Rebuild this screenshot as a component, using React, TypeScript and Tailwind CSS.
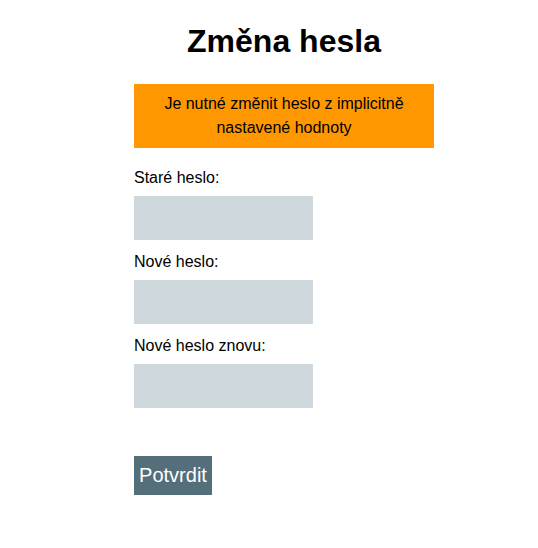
export default function App() {
  return (
    <div className="min-h-[548px] w-full bg-white font-['Liberation_Sans',Arial,sans-serif] text-black">
      <div className="ml-[134px] w-[300px] pt-[23px] flex flex-col">
        <h1 className="text-center text-[32px] leading-[37px] font-bold">Změna hesla</h1>

        <div className="mt-[24px] bg-[#ff9800] py-[8px] px-4 text-center text-[16px] leading-[24px]">
          Je nutné změnit heslo z implicitně nastavené hodnoty
        </div>

        <label className="mt-[18px] text-[16px] leading-[24px]">Staré heslo:</label>
        <input type="password" className="mt-[6px] w-[179px] h-[44px] bg-[#cfd8dc] outline-none border-0" />

        <label className="mt-[10px] text-[16px] leading-[24px]">Nové heslo:</label>
        <input type="password" className="mt-[6px] w-[179px] h-[44px] bg-[#cfd8dc] outline-none border-0" />

        <label className="mt-[10px] text-[16px] leading-[24px]">Nové heslo znovu:</label>
        <input type="password" className="mt-[6px] w-[179px] h-[44px] bg-[#cfd8dc] outline-none border-0" />

        <div className="mt-[48px]">
          <button className="h-[39px] w-[78px] bg-[#546e7a] text-white text-[20px] leading-[39px] text-center">
            Potvrdit
          </button>
        </div>
      </div>
    </div>
  );
}
